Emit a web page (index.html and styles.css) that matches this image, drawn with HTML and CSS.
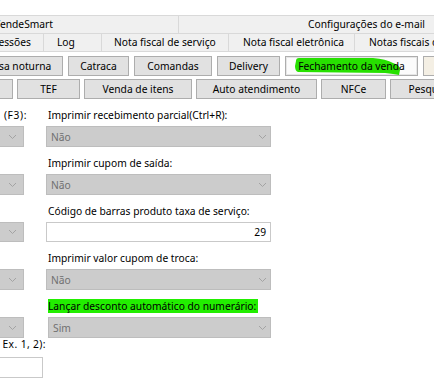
FILE: index.html
```html
<!DOCTYPE html>
<html lang="pt-BR">
<head>
    <meta charset="UTF-8">
    <title>Configurações - Fechamento da venda</title>
    <link rel="stylesheet" href="styles.css">
</head>
<body>
    <!-- abas superiores (duas linhas, cortadas à esquerda) -->
    <div class="tabs">
        <div class="tab-row tab-row-top">
            <div class="tab tab-vende">VendeSmart</div>
            <div class="tab tab-email">Configurações do e-mail</div>
        </div>
        <div class="tab-row tab-row-bottom">
            <div class="tab tab-impressoes">Impressões</div>
            <div class="tab tab-log">Log</div>
            <div class="tab tab-nfse">Nota fiscal de serviço</div>
            <div class="tab tab-nfe">Nota fiscal eletrônica</div>
            <div class="tab tab-notas">Notas fiscais de entrada</div>
        </div>
    </div>

    <div class="page">
        <div class="btn-row">
            <button class="btn btn-noturna">Pausa noturna</button>
            <button class="btn btn-catraca">Catraca</button>
            <button class="btn btn-comandas">Comandas</button>
            <button class="btn btn-delivery">Delivery</button>
            <button class="btn btn-fechamento active">
                <svg class="marker" viewBox="0 0 133 20" width="133" height="20">
                    <path d="M11,5 Q11,2 14,2 L88,2 Q101,3 108,7 Q115,9 115,14 L114,19 Q109,18 100,17 L13,16 Q10,15 10,10 Z" fill="#27e000"/>
                </svg>
                <span class="btn-label">Fechamento da venda</span>
            </button>
            <button class="btn btn-extra">Balança</button>
        </div>
        <div class="btn-row">
            <button class="btn btn-geral">Geral</button>
            <button class="btn btn-tef">TEF</button>
            <button class="btn btn-venda">Venda de itens</button>
            <button class="btn btn-auto">Auto atendimento</button>
            <button class="btn btn-nfce">NFCe</button>
            <button class="btn btn-pesquisa">Pesquisa</button>
        </div>

        <div class="form">
            <div class="col col-left">
                <div class="field">
                    <div class="label label-f3">(F3):</div>
                    <div class="combo combo-cut"><span></span><svg class="chevron" width="7" height="4" viewBox="0 0 7 4"><path d="M0,0 L3.5,3.5 L7,0" fill="none" stroke="#a3a3a3"/></svg></div>
                </div>
                <div class="field">
                    <div class="label">&nbsp;</div>
                    <div class="combo combo-cut"><span></span><svg class="chevron" width="7" height="4" viewBox="0 0 7 4"><path d="M0,0 L3.5,3.5 L7,0" fill="none" stroke="#a3a3a3"/></svg></div>
                </div>
                <div class="field">
                    <div class="label">&nbsp;</div>
                    <div class="combo combo-cut combo-short"><span></span><svg class="chevron" width="7" height="4" viewBox="0 0 7 4"><path d="M0,0 L3.5,3.5 L7,0" fill="none" stroke="#a3a3a3"/></svg></div>
                </div>
                <div class="field">
                    <div class="label">&nbsp;</div>
                    <div class="combo combo-cut"><span></span><svg class="chevron" width="7" height="4" viewBox="0 0 7 4"><path d="M0,0 L3.5,3.5 L7,0" fill="none" stroke="#a3a3a3"/></svg></div>
                </div>
                <div class="field field-last">
                    <div class="label">&nbsp;</div>
                    <div class="combo combo-cut"><span></span><svg class="chevron" width="7" height="4" viewBox="0 0 7 4"><path d="M0,0 L3.5,3.5 L7,0" fill="none" stroke="#a3a3a3"/></svg></div>
                </div>
                <div class="field">
                    <div class="label label-vias">Ex. 1, 2):</div>
                    <div class="textbox textbox-cut"></div>
                </div>
            </div>

            <div class="col col-right">
                <div class="field">
                    <div class="label">Imprimir recebimento parcial(Ctrl+R):</div>
                    <div class="combo"><span>Não</span><svg class="chevron" width="7" height="4" viewBox="0 0 7 4"><path d="M0,0 L3.5,3.5 L7,0" fill="none" stroke="#a3a3a3"/></svg></div>
                </div>
                <div class="field">
                    <div class="label">Imprimir cupom de saída:</div>
                    <div class="combo"><span>Não</span><svg class="chevron" width="7" height="4" viewBox="0 0 7 4"><path d="M0,0 L3.5,3.5 L7,0" fill="none" stroke="#a3a3a3"/></svg></div>
                </div>
                <div class="field">
                    <div class="label">Código de barras produto taxa de serviço:</div>
                    <div class="textbox">29</div>
                </div>
                <div class="field">
                    <div class="label">Imprimir valor cupom de troca:</div>
                    <div class="combo"><span>Não</span><svg class="chevron" width="7" height="4" viewBox="0 0 7 4"><path d="M0,0 L3.5,3.5 L7,0" fill="none" stroke="#a3a3a3"/></svg></div>
                </div>
                <div class="field field-shift">
                    <div class="label"><span class="highlight">Lançar desconto automático do numerário:</span></div>
                    <div class="combo"><span>Sim</span><svg class="chevron" width="7" height="4" viewBox="0 0 7 4"><path d="M0,0 L3.5,3.5 L7,0" fill="none" stroke="#a3a3a3"/></svg></div>
                </div>
            </div>
        </div>
    </div>
</body>
</html>
```

FILE: styles.css
```css
* {
    box-sizing: border-box;
}

body {
    margin: 0;
    width: 434px;
    height: 387px;
    overflow: hidden;
    background-color: #fff;
    font-family: "Noto Sans", sans-serif;
    font-size: 10.25px;
    color: #000;
}

/* Abas */
.tabs {
    margin-top: 15px;
}

.tab-row {
    display: flex;
    white-space: nowrap;
    background-color: #f0f0f0;
    border-top: 1px solid #d9d9d9;
}

.tab-row-top {
    height: 18px;
}

.tab-row-bottom {
    height: 19px;
    border-bottom: 1px solid #d9d9d9;
}

.tab {
    flex: none;
    line-height: 17px;
    border-right: 1px solid #d9d9d9;
    padding-left: 12px;
}

.tab-vende {
    margin-left: -18px;
    width: 197px;
}

.tab-email {
    width: 373px;
    padding-left: 129px;
}

.tab-impressoes {
    margin-left: -37px;
    width: 81px;
}

.tab-log {
    width: 58px;
    padding-left: 13px;
}

.tab-nfse {
    width: 127px;
}

.tab-nfe {
    width: 126px;
    padding-left: 14px;
}

.tab-notas {
    width: 160px;
    padding-left: 14px;
}

/* Botões de seção */
.page {
    padding-top: 4px;
}

.btn-row {
    display: flex;
    gap: 5px;
    height: 20px;
    margin-bottom: 3px;
    white-space: nowrap;
}

.btn-row + .btn-row {
    gap: 4px;
}

.btn {
    flex: none;
    position: relative;
    height: 20px;
    padding: 0;
    border: 1px solid #adadad;
    background-color: #e1e1e1;
    font-family: inherit;
    font-size: 10.25px;
    color: #000;
    line-height: 18px;
}

.btn.active {
    background-color: #fbfbfb;
    box-shadow: inset 0 0 0 1px #e6e6e6;
}

.marker {
    position: absolute;
    left: -1px;
    top: -1px;
}

.btn-label {
    position: relative;
}

.btn-noturna { width: 94px; margin-left: -31px; }
.btn-catraca { width: 61px; }
.btn-comandas { width: 78px; }
.btn-delivery { width: 63px; }
.btn-fechamento { width: 133px; }
.btn-extra { width: 80px; background-color: #f4efe4; }

.btn-geral { width: 60px; margin-left: -47px; }
.btn-tef { width: 63px; }
.btn-venda { width: 108px; }
.btn-auto { width: 121px; }
.btn-nfce { width: 65px; }
.btn-pesquisa { width: 80px; }

/* Formulário */
.form {
    display: flex;
    padding-top: 6px;
}

.col {
    flex: none;
    display: flex;
    flex-direction: column;
}

.col-left {
    width: 46px;
}

.col-right {
    width: 225px;
}

.field {
    display: flex;
    flex-direction: column;
    margin-bottom: 9px;
}

.field-last {
    margin-bottom: 0;
}

.label {
    height: 15px;
    line-height: 15px;
    margin-bottom: 3px;
    padding-left: 2px;
    white-space: nowrap;
}

.col-left .label {
    text-align: right;
}

.label-f3 {
    width: 27px;
    letter-spacing: 0.6px;
}

.label-vias {
    margin-left: -10px;
    width: 56px;
    overflow: hidden;
    letter-spacing: 0.4px;
}

.col-left .field-last + .field .label {
    margin-top: -1px;
    margin-bottom: 5px;
}

.combo {
    display: flex;
    align-items: center;
    justify-content: space-between;
    height: 21px;
    padding: 0 4px 0 4px;
    background-color: #cccccc;
    border: 1px solid #bdbdbd;
    color: #707070;
}

.combo-cut {
    width: 124px;
    margin-left: -100px;
    padding-right: 7px;
}

.combo-short {
    height: 20px;
}

.chevron {
    flex: none;
}

.textbox {
    height: 20px;
    line-height: 18px;
    padding: 0 4px;
    text-align: right;
    border: 1px solid #c9c9c9;
    background-color: #fff;
}

.textbox-cut {
    width: 143px;
    margin-left: -100px;
    height: 21px;
}

.field-shift .combo {
    margin-left: 2px;
}

.highlight {
    background-color: #22ee00;
    padding-right: 2px;
}
```
